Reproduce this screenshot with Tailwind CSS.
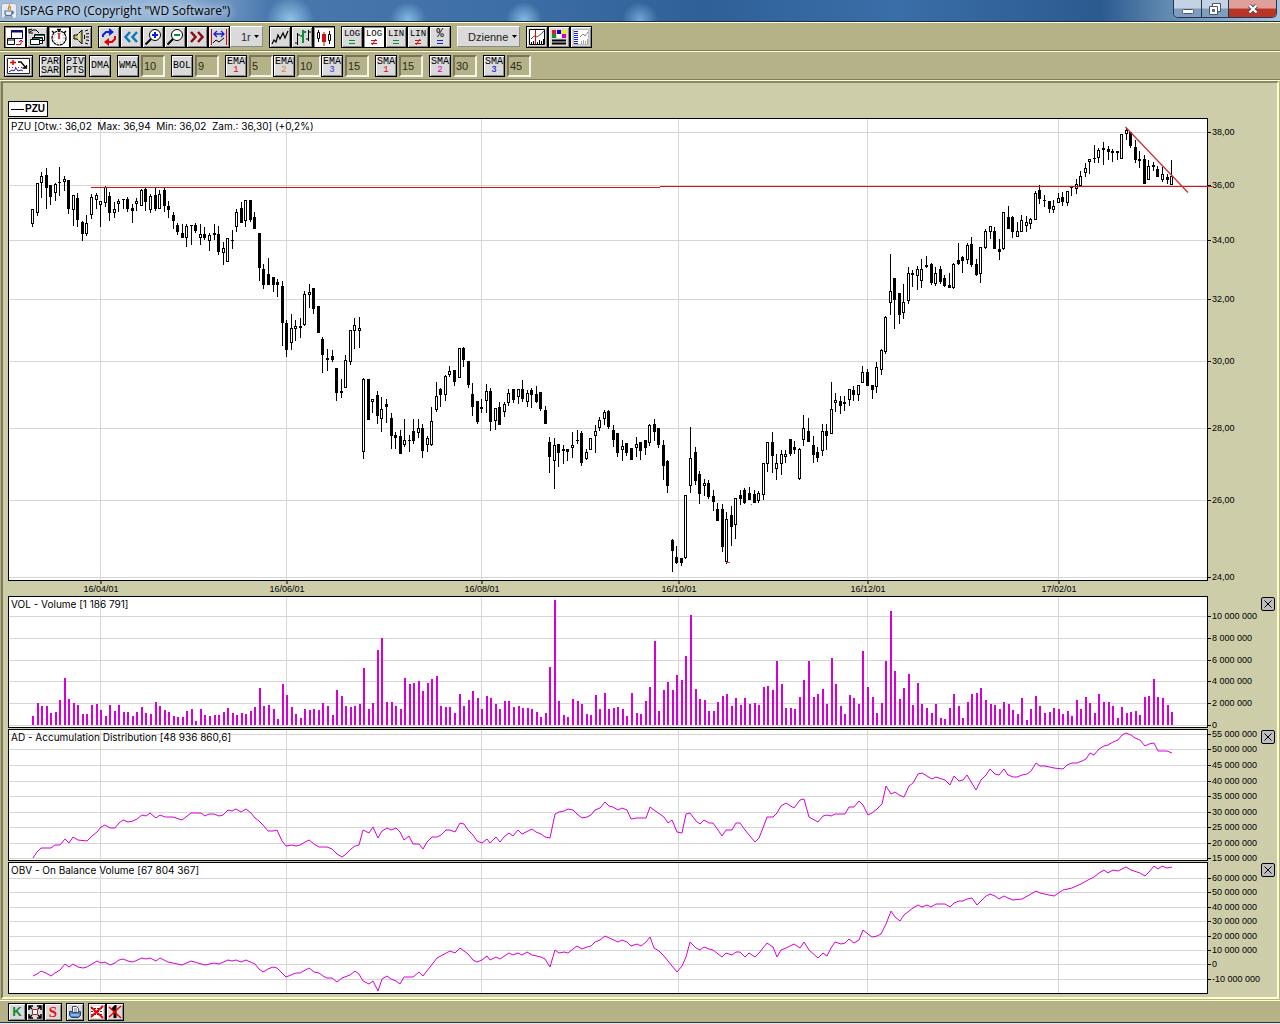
<!DOCTYPE html>
<html lang="pl">
<head>
<meta charset="utf-8">
<title>ISPAG PRO</title>
<script src="https://cdn.jsdelivr.net/npm/@tailwindcss/browser@4"></script>
</head>
<body class="flex min-h-screen flex-col border-b border-[#dfe8ee] bg-[#b5b288] font-['Liberation_Sans',sans-serif] text-black">

<!-- Title bar -->
<header class="flex h-[22px] items-start justify-between border-b border-[#1b2d45] bg-[radial-gradient(circle_at_290px_20px,#8fc4e8_0,transparent_24px),radial-gradient(circle_at_408px_20px,#84bbe4_0,transparent_18px),radial-gradient(circle_at_524px_20px,#84bbe4_0,transparent_18px),radial-gradient(circle_at_640px_20px,#6fa6d4_0,transparent_18px),linear-gradient(90deg,#9fbddb_0,#8fb0d2_14%,#4a78ad_21%,#3d6ea6_40%,#2f6098_55%,#3a6ea8_70%,#2b5a8f_86%,#6088b0_91%,#a9c2dc_100%)]">
  <div class="flex h-[21px] items-center gap-[3px] pl-px">
    <svg class="size-4" viewBox="0 0 16 16" aria-hidden="true"><rect x=".5" y=".5" width="15" height="15" rx="2" fill="#e4edf5" stroke="#9ab"/><path d="M8 1.500c2 2-2.500 3 0 5.500M10 3.500c-1.500 1-1 2 0 3" fill="none" stroke="#e8801a" stroke-width="1.300"/><path d="M4 8h7v2c0 2-1 2.500-2 2.500H6c-1 0-2-.5-2-2.500zM11 8.500c2 0 2 2 0 2M3 14h9" fill="none" stroke="#4a7098" stroke-width="1.200"/></svg>
    <h1 class="font-['Open_Sans','Noto_Sans',sans-serif] text-[12px] leading-5 [text-shadow:0_0_6px_#d8e6f4,0_0_10px_#d8e6f4]">ISPAG PRO (Copyright "WD Software")</h1>
  </div>
  <div class="mr-[3px] flex h-[18px] overflow-hidden rounded-b-[5px] border border-t-0 border-[#24364e]">
    <button aria-label="Minimize" class="flex w-7 items-center justify-center border-r border-[#24364e] bg-linear-to-b from-[#c3d3e4] from-45% to-[#7f9dbe] to-55%"><svg class="size-3" viewBox="0 0 12 12"><rect x=".5" y="6.500" width="11" height="4" rx="1" fill="#fff" stroke="#4b5566"/></svg></button>
    <button aria-label="Restore" class="flex w-[27px] items-center justify-center border-r border-[#24364e] bg-linear-to-b from-[#c3d3e4] from-45% to-[#7f9dbe] to-55%"><svg class="size-3" viewBox="0 0 12 12"><path d="M3.500.5h8v8h-8z" fill="#fff" stroke="#4b5566"/><path d="M.5 3.500h8v8h-8z" fill="#fff" stroke="#4b5566"/><path d="M3.500 6.500h2v2h-2z" fill="#7f9dbe" stroke="#4b5566"/></svg></button>
    <button aria-label="Close" class="flex w-[47px] items-center justify-center bg-linear-to-b from-[#dfa09c] from-45% to-[#b83426] to-55%"><svg class="h-3 w-3" viewBox="0 0 12 12"><path d="M2.500 2.500l7 7M9.500 2.500l-7 7" stroke="#4b4450" stroke-width="4"/><path d="M2.500 2.500l7 7M9.500 2.500l-7 7" stroke="#fff" stroke-width="2.400"/></svg></button>
  </div>
</header>

<!-- Main toolbar -->
<nav aria-label="Chart" class="flex h-[29px] items-center gap-1.5 border-t border-b border-t-[#ffffce] border-b-[#7d7b5b] pl-1 [&>div]:flex [&_button]:flex [&_button]:size-[22px] [&_button]:flex-col [&_button]:items-center [&_button]:justify-center [&_button]:border [&_button]:border-black [&_button]:bg-[#dadada] [&_button]:font-['Liberation_Mono',monospace] [&_button]:text-[9px] [&_button]:leading-[10px] [&_button]:shadow-[inset_1px_1px_#fff,inset_-1px_-1px_#8a8a8a] [&_button[aria-pressed=true]]:bg-white [&_button[aria-pressed=true]]:shadow-[inset_1px_1px_#8a8a8a] [&_button>svg]:size-[18px] [&_svg]:fill-none">
  <div>
    <button aria-label="New window" aria-pressed="true"><svg viewBox="0 0 18 18"><path d="M5.500 2.500h11v8h-11z" stroke="#0a0a78"/><path d="M5 3.500h12" stroke="#0a0a78" stroke-width="2"/><path d="M1.500 10.500h7v6h-7z" stroke="#000"/><path d="M1 12h8" stroke="#000"/><path d="M10 16.500h5v-4M13 14l2-2 2 2" stroke="#e00000"/></svg></button>
    <button aria-label="Windows"><svg viewBox="0 0 18 18"><path d="M6.500 6.500h10v6h-10zM4.500 9.500h10v6h-10z" fill="#fff" stroke="#000"/><path d="M7 7.500h9M5 10.500h9" stroke="#167a6a"/><path d="M2.500 11.500h9v5h-9z" fill="#fff" stroke="#000"/><path d="M1 2l3-1M1 1v4h4M2 4l3-2h3l3 3" stroke="#000"/></svg></button>
    <button aria-label="Timer" aria-pressed="true"><svg viewBox="0 0 18 18"><circle cx="9" cy="10" r="7" stroke="#000" stroke-width="1.200" stroke-dasharray="3 .5"/><circle cx="9" cy="10" r="5" stroke="#777" stroke-dasharray="1 2"/><path d="M7 1.500h4M9 1v3M2 3l2 2M16 3l-2 2" stroke="#000" stroke-width="1.500"/><path d="M9 5v6" stroke="#e00000" stroke-width="1.500"/></svg></button>
    <button aria-label="Sound"><svg viewBox="0 0 18 18"><path d="M2 7h3l5-5v14l-5-5H2z" fill="#c8c070" stroke="#000"/><path d="M7 5v8" stroke="#fff"/><path d="M12.500 7v4M13 3l3-1M14 6l3-.5M14 9h3M14 12l3 .5M13 15l3 1" stroke="#000"/></svg></button>
  </div>
  <div>
    <button aria-label="Refresh"><svg viewBox="0 0 18 18"><path d="M3 9V7l3-3h4" stroke="#1020e0" stroke-width="2"/><path d="M9 0l5 4-5 4z" fill="#1020e0"/><path d="M15 8v3l-3 3H9" stroke="#e00000" stroke-width="2"/><path d="M9 10l-5 4 5 4z" fill="#e00000"/></svg></button>
    <button aria-label="Back"><svg viewBox="0 0 18 18"><path d="M8 4L3.500 9 8 14M15 4l-4.500 5 4.500 5" stroke="#0a7ab8" stroke-width="2.500"/></svg></button>
    <button aria-label="Zoom in"><svg viewBox="0 0 18 18"><circle cx="11" cy="7" r="5.500" fill="#fff" stroke="#000"/><path d="M7 11l-5.500 5.500" stroke="#000" stroke-width="2"/><path d="M11 4v6M8 7h6" stroke="#1020e0" stroke-width="2"/></svg></button>
    <button aria-label="Zoom out"><svg viewBox="0 0 18 18"><circle cx="11" cy="7" r="5.500" fill="#fff" stroke="#000"/><path d="M7 11l-5.500 5.500" stroke="#000" stroke-width="2"/><path d="M8 7h6" stroke="#0a9030" stroke-width="2"/></svg></button>
    <button aria-label="Forward"><svg viewBox="0 0 18 18"><path d="M3 4l4.500 5L3 14M10 4l4.500 5-4.500 5" stroke="#8c0a14" stroke-width="2.500"/></svg></button>
    <button aria-label="Fit range"><svg viewBox="0 0 18 18"><path d="M1.500 1v16M16.500 1v16" stroke="#e00000"/><path d="M4 6h10M7 3L4 6l3 3M11 3l3 3-3 3" stroke="#1020e0" stroke-width="1.300"/><path d="M3 15l3-3 3 2 5-4" stroke="#000"/></svg></button>
    <div class="relative flex h-[22px] w-[33px] items-center"><select aria-label="Range" class="h-[21px] w-full appearance-none border border-t-white border-r-[#8a8a8a] border-b-[#8a8a8a] border-l-white bg-[#dadada] py-0 pl-[10px] text-[11px] leading-4 text-[#30283c]"><option>1r</option></select><svg class="pointer-events-none absolute right-1 h-[3px] w-[5px]" viewBox="0 0 5 3"><path d="M0 0h5L2.500 3z" fill="#000"/></svg></div>
  </div>
  <div>
    <button aria-label="Line chart"><svg viewBox="0 0 18 18"><path d="M1 16l2-4 2 2 2-7 2 4 3-6 2 5 3-7" stroke="#000" stroke-width="1.200"/></svg></button>
    <button aria-label="Bar chart"><svg viewBox="0 0 18 18"><path d="M4.500 5v12M2 15h2.500M4.500 7H7M15.500 2v11M13 11h2.500M15.500 4H18" stroke="#000"/><path d="M10 2v13M7.500 8H10M10 4h3" stroke="#0a9030" stroke-width="2"/></svg></button>
    <button aria-label="Candle chart" aria-pressed="true"><svg viewBox="0 0 18 18"><path d="M3.500 2v2M3.500 11v3M14.500 3v3M14.500 13v3" stroke="#000"/><path d="M2.500 4.500h2v6h-2zM13.500 6.500h2v6h-2z" stroke="#000"/><path d="M9 4v14" stroke="#b01010"/><path d="M7 6h4v8H7z" fill="#d01010"/></svg></button>
  </div>
  <div>
    <button><span>LOG</span><svg class="h-[6px]!" viewBox="0 0 18 6"><path d="M6 1.500h6M6 4.500h6" stroke="#0a9030"/></svg></button>
    <button aria-pressed="true"><span>LOG</span><svg class="h-[6px]!" viewBox="0 0 18 6"><path d="M6 1.500h6M6 4.500h6M7 6l4-6" stroke="#d01010"/></svg></button>
    <button><span>LIN</span><svg class="h-[6px]!" viewBox="0 0 18 6"><path d="M6 1.500h6M6 4.500h6" stroke="#0a9030"/></svg></button>
    <button><span>LIN</span><svg class="h-[6px]!" viewBox="0 0 18 6"><path d="M6 1.500h6M6 4.500h6M7 6l4-6" stroke="#d01010"/></svg></button>
    <button><span class="text-[12px]">%</span><svg class="h-[6px]!" viewBox="0 0 18 6"><path d="M6 1.500h6M6 4.500h6" stroke="#1020e0"/></svg></button>
  </div>
  <div class="relative flex h-[22px] w-[63px] items-center"><select aria-label="Interval" class="h-[21px] w-full appearance-none border border-t-white border-r-[#8a8a8a] border-b-[#8a8a8a] border-l-white bg-[#dadada] py-0 pl-[10px] text-[11px] leading-4 text-[#222]"><option>Dzienne</option></select><svg class="pointer-events-none absolute right-[3px] h-[3px] w-[5px]" viewBox="0 0 5 3"><path d="M0 0h5L2.500 3z" fill="#000"/></svg></div>
  <div>
    <button aria-label="Cursor"><svg viewBox="0 0 18 18"><path d="M1.500 1.500h15v15h-15z" fill="#fff" stroke="#000"/><path d="M3 11l3-3 3 1 4-3 3-3" stroke="#555"/><path d="M3.500 14v2M5.500 13v3M9.500 14v2M11.500 12v4M13.500 13v3M15.500 11v5" stroke="#000"/><path d="M7.500 2v14" stroke="#e00000"/></svg></button>
    <button aria-label="Colours"><svg viewBox="0 0 18 18"><path d="M2 2h4v4H2z" fill="#e02020"/><path d="M7 2h4v4H7z" fill="#0000e8"/><path d="M12 2h4v4h-4z" fill="#f0f000"/><path d="M2 6h4v4H2z" fill="#109030"/><path d="M7 6h4v4H7z" fill="#fff"/><path d="M12 6h4v4h-4z" fill="#d000d0"/><path d="M2 12.500h14M2 15.500h14" stroke="#000" stroke-width="2"/></svg></button>
    <button aria-label="Panels"><svg viewBox="0 0 18 18"><path d="M1.500 1.500h15v15h-15z" fill="#fff" stroke="#bbb"/><path d="M2 3.500h4M2 5.500h4M2 7.500h4M2 9.500h4M2 11.500h4M2 13.500h4M2 15.500h4" stroke="#1020e0"/><path d="M8 9l3-3 2 2 3-4" stroke="#888"/><path d="M9.500 13v3M11.500 12v4M13.500 13v3M15.500 11v5" stroke="#aaa"/></svg></button>
  </div>
</nav>

<!-- Indicator toolbar -->
<nav aria-label="Indicators" class="flex h-[29px] items-center gap-1.5 border-t border-b border-t-[#ffffce] border-b-[#7d7b5b] pl-1 [&_div]:flex [&_button]:mr-0.5 [&_button]:flex [&_button]:h-[22px] [&_button]:w-[22px] [&_button]:flex-col [&_button]:items-center [&_button]:justify-center [&_button]:border [&_button]:border-black [&_button]:bg-[#dadada] [&_button]:font-['Liberation_Mono',monospace] [&_button]:text-[10px] [&_button]:leading-[9px] [&_button]:shadow-[inset_1px_1px_#fff,inset_-1px_-1px_#8a8a8a] [&_input]:h-[22px] [&_input]:w-6 [&_input]:border-2 [&_input]:border-t-[#77755a] [&_input]:border-r-[#f4f4ee] [&_input]:border-b-[#f4f4ee] [&_input]:border-l-[#77755a] [&_input]:bg-[#b5b288] [&_input]:pl-px [&_input]:text-[11px] [&_input]:leading-4 [&_input]:text-[#2c2c20]">
  <button aria-label="Drawing" class="mr-0! w-[29px]!"><svg class="h-[18px] w-[25px] fill-none" viewBox="0 0 25 18"><path d="M1.500 1.500h22v15h-22z" fill="#fff" stroke="#222"/><path d="M4 5.500h6M7 3v5" stroke="#e00000" stroke-width="1.500"/><path d="M3 10.500h18" stroke="#e00000" stroke-dasharray="1 2"/><path d="M3 15l3-2 2 1 2-3 2 3 3-1 2 1" stroke="#1020e0"/><path d="M12 5h3l5 6M16.500 11h4V8" stroke="#000" stroke-width="1.300"/></svg></button>
  <div class="gap-[3px] [&>button]:mr-0!">
    <button><span>PAR</span><span>SAR</span></button>
    <button><span>PIV</span><span>PTS</span></button>
    <button>DMA</button>
  </div>
  <div><button>WMA</button><input aria-label="WMA" value="10"></div>
  <div><button>BOL</button><input aria-label="BOL" value="9"></div>
  <div>
    <button><span>EMA</span><span class="text-[9px] text-[#f00000]">1</span></button><input aria-label="EMA 1" value="5">
    <button><span>EMA</span><span class="text-[9px] text-[#e08020]">2</span></button><input aria-label="EMA 2" value="10">
    <button><span>EMA</span><span class="text-[9px] text-[#3030e0]">3</span></button><input aria-label="EMA 3" value="15">
  </div>
  <div><button><span>SMA</span><span class="text-[9px] text-[#f00000]">1</span></button><input aria-label="SMA 1" value="15"></div>
  <div><button><span>SMA</span><span class="text-[9px] text-[#d000d0]">2</span></button><input aria-label="SMA 2" value="30"></div>
  <div><button><span>SMA</span><span class="text-[9px] text-[#0000e0]">3</span></button><input aria-label="SMA 3" value="45"></div>
</nav>

<!-- Charts -->
<main class="grow border-t border-[#ffffce]">
  <div class="ml-px mr-px border-x-2 border-t-2 border-b-2 border-t-[#8b8967] border-r-[#ffffce] border-b-[#ffffce] border-l-[#7d7b5b] bg-[#cecdaa] pt-[18px] pb-[3px] pl-[5px]">
    <div class="mb-px flex h-4 w-10 items-center justify-end gap-px border border-black bg-white px-0.5 text-[10px] leading-3 font-bold"><span class="h-px grow bg-black"></span>PZU</div>
    <section id="price" class="mb-px"></section>
    <section id="vol" class="mb-px"></section>
    <section id="ad" class="mb-px"></section>
    <section id="obv"></section>
  </div>
</main>

<!-- Bottom toolbar -->
<footer class="flex h-[23px] items-center gap-1 border-t border-b border-t-[#ffffce] border-b-[#2a3a40] pl-2 [&>div]:flex [&_button]:flex [&_button]:size-[18px] [&_button]:items-center [&_button]:justify-center [&_button]:border [&_button]:border-black [&_button]:bg-[#dadada] [&_button]:font-['Liberation_Serif',serif] [&_button]:text-[15px] [&_button]:leading-4 [&_button]:font-bold [&_button]:shadow-[inset_1px_1px_#fff,inset_-1px_-1px_#8a8a8a] [&_svg]:size-[14px] [&_svg]:fill-none">
  <div>
    <button class="font-['Liberation_Sans',sans-serif]! text-[13px]! text-[#0a8a30]">K</button>
    <button aria-label="Full view"><svg viewBox="0 0 14 14"><path d="M1 5V1h4M9 1h4v4M13 9v4H9M5 13H1V9M1 1l3 3M13 1l-3 3M1 13l3-3M13 13l-3-3" stroke="#000" stroke-width="1.500"/><path d="M4.500 4.500h5v5h-5z" fill="#fff" stroke="#b02020"/></svg></button>
    <button class="text-[#f01010]">S</button>
  </div>
  <div>
    <button aria-label="Print"><svg viewBox="0 0 14 14"><path d="M1.500 6.500h11v4l-2 2h-7l-2-2z" fill="#4a86c0" stroke="#1c4a80"/><path d="M4.500 1.500h4l2 2v4h-6z" fill="#fff" stroke="#445"/><path d="M6 4h3M6 6h3" stroke="#678"/><path d="M3 10h8" stroke="#d0e4f4"/></svg></button>
  </div>
  <div>
    <button aria-label="Clear lines"><svg viewBox="0 0 14 14"><path d="M1 1h12v12H1z" fill="#fff"/><path d="M1 3.500h12M1 6.500h12M1 9.500h12" stroke="#333" stroke-dasharray="2 1"/><path d="M1 2l12 11M13 1L1 12" stroke="#f00000" stroke-width="2"/></svg></button>
    <button aria-label="Clear one line"><svg viewBox="0 0 14 14"><path d="M4 5l3-3v11" stroke="#000" stroke-width="3"/><path d="M1 2l12 11M13 1L1 12" stroke="#f00000" stroke-width="1.500"/></svg></button>
  </div>
</footer>

<script>
// Session candles: high, body top, body bottom, low; a trailing "b" marks a falling session
const candles = `209,209,224,227
183,183,213,216
172,176,183,198
168,175,188,209b
185,185,197,205b
183,184,193,201
167,182,183,196b
176,179,182,191
180,180,209,214b
195,195,210,226
193,198,220,227b
221,222,234,241b
215,223,234,236
194,197,215,219
193,195,200,209
201,201,205,227
186,187,203,207
192,196,213,221b
202,209,213,218
199,201,204,212
199,199,200,209b
197,199,209,212b
204,208,211,223b
198,201,204,211
189,190,206,206
188,189,202,211b
194,196,210,213
188,195,209,211b
190,194,209,209
187,190,206,212b
201,206,210,218b
212,215,221,229b
223,225,232,235b
224,233,238,238b
224,226,238,247
225,225,226,245b
223,225,231,233b
224,234,238,245
227,234,238,240b
233,235,241,251
224,233,235,240b
226,234,252,255b
242,248,253,265
238,238,262,262
230,240,241,249b
209,212,227,232
202,208,223,223b
200,200,221,227
200,200,220,222b
212,217,229,229b
233,233,268,281b
264,269,285,289b
258,274,285,285b
277,277,285,292b
279,282,285,297b
281,286,323,346b
320,323,350,357b
314,328,343,350
320,326,329,341
318,326,328,338b
291,294,325,326
284,292,295,308
288,288,309,314b
306,306,333,333b
337,339,355,373b
349,358,360,371b
350,356,360,362b
368,368,393,401b
379,391,393,398b
355,360,388,388
330,330,362,365
318,325,331,349
317,328,331,348
378,379,452,459
379,379,420,420b
399,399,402,413
391,395,416,424b
397,409,419,432
399,404,407,423b
413,418,436,449b
432,435,438,449b
430,436,454,454b
419,440,445,447
435,440,441,452b
419,431,441,444b
419,428,433,438
424,428,451,458b
436,438,445,452
407,421,445,446
382,396,410,412
388,389,395,407b
375,376,395,401
366,371,375,377
370,370,382,386b
348,348,378,378
347,348,360,367b
361,361,385,388b
383,394,407,416b
401,401,422,424b
399,407,409,413b
384,391,401,413
388,391,422,431b
408,408,421,430
402,407,425,425b
402,404,412,417
389,393,403,406
389,389,400,403b
389,389,397,404
380,389,399,402b
390,393,402,407
388,390,395,408b
386,394,402,403b
392,392,409,411b
406,410,424,424b
437,442,457,473b
438,445,461,489
444,444,453,467b
445,449,451,464b
449,449,452,461b
432,445,448,458
430,440,441,444b
431,433,463,466b
449,452,459,460
438,438,450,450
425,431,436,453
417,420,428,431
410,412,419,425
410,411,427,429b
425,430,440,447b
433,433,453,457b
440,446,450,461
443,443,453,456b
448,448,460,460b
437,444,448,457
442,442,451,460b
440,440,448,455b
424,425,443,446
419,424,432,441b
428,428,445,448b
440,445,466,480b
460,461,486,493b
539,540,551,572b
546,557,563,564b
558,558,563,566b
495,495,558,559
427,458,486,493
447,452,481,485b
471,474,494,504b
479,483,486,496
480,483,497,499b
490,496,502,511b
503,509,521,521b
504,509,547,552b
512,519,562,564
506,515,527,546b
498,498,525,539
490,495,499,505b
488,490,503,504b
487,493,500,500b
490,494,503,503b
491,493,501,503
463,463,495,500
442,442,464,472
432,442,456,473b
454,463,469,480
450,454,464,475
450,454,457,463
439,439,454,456b
441,447,450,454b
448,449,479,480
415,428,440,446
418,431,442,442b
436,445,455,463b
447,452,458,462b
424,431,451,456
424,431,436,450b
382,409,434,434
393,400,403,412
396,401,406,414b
396,402,404,411b
389,389,400,406
386,390,395,401b
385,385,395,401
366,372,383,383
369,372,386,386b
385,385,390,399b
362,367,387,393
349,350,370,375
316,317,352,354
254,291,303,315
278,278,300,329b
293,293,315,324b
284,302,313,319
267,273,301,304
270,273,275,287b
266,269,276,290
259,269,281,288
256,265,267,268b
263,264,283,285b
267,273,284,286
266,269,282,284b
275,278,286,287b
273,285,288,288b
263,264,288,289
243,260,264,265b
256,257,261,273b
243,245,260,264
237,244,265,267b
259,264,275,276b
247,247,274,283
229,231,248,249
226,226,232,239
227,231,249,249b
239,249,252,260b
212,212,249,250
206,217,229,229b
216,217,232,238b
222,231,237,237
215,220,232,232
216,222,226,232
218,219,224,229
191,193,220,220
185,190,199,204b
195,200,201,207b
201,201,209,213b
200,206,210,213
193,198,203,203
192,197,202,206b
191,191,203,206
187,187,188,196b
179,184,189,194
171,176,186,186
163,168,173,177
159,159,162,174
145,158,159,163b
148,150,158,163
142,148,150,165b
146,149,152,160b
149,151,153,162b
151,151,153,160b
134,134,159,159
128,130,134,140
132,132,146,148b
140,147,160,163b
151,159,161,168b
155,159,184,184b
160,166,180,180
162,165,167,171b
166,169,177,177b
167,174,180,182
174,177,180,184b
160,176,185,185`.split('\n').map(r => ({ v: r.replace('b', '').split(',').map(Number), down: r.endsWith('b') }));

const volume = [9,22,19,19,12,13,25,47,26,22,20,11,11,20,21,15,9,20,14,20,13,13,9,13,18,12,11,23,19,15,13,9,8,8,14,16,4,16,10,9,10,10,13,17,12,10,12,11,14,18,37,19,20,16,6,41,30,18,11,7,16,15,16,15,22,19,10,35,29,19,18,19,21,57,16,22,75,87,23,23,19,16,47,41,42,44,34,42,46,49,19,18,18,12,31,19,25,34,27,16,29,27,21,16,24,24,18,19,17,17,16,13,8,12,58,125,24,10,8,26,24,21,11,10,30,16,32,16,17,18,16,9,32,12,11,24,38,84,14,35,43,35,50,45,69,110,36,26,25,14,14,23,29,31,19,27,20,27,21,22,20,38,39,35,64,41,17,17,16,28,45,64,28,31,36,21,67,41,19,11,30,27,21,74,38,28,12,22,64,114,54,26,37,51,20,42,21,17,12,21,7,6,17,31,19,7,23,31,32,37,25,21,20,16,23,21,15,11,27,5,16,29,19,12,13,17,16,11,14,9,25,16,28,22,12,31,23,23,19,7,18,12,13,14,10,28,29,46,28,27,20,13];

const adLine = "33,858 37,852 41,848 51,848 55,845 60,845 65,839 69,843 73,837 78,840 87,841 92,836 97,832 101,827 105,825 110,828 115,828 119,823 123,820 128,822 133,821 137,819 142,815 146,816 150,813 156,818 160,815 165,817 173,817 182,820 191,813 201,813 205,816 209,814 214,814 219,816 223,815 228,810 232,811 236,809 241,812 246,809 251,813 255,818 259,821 263,825 268,831 273,831 277,830 282,841 286,846 292,845 296,846 300,845 305,842 309,840 314,844 319,847 327,847 332,849 337,854 342,857 346,854 351,849 355,846 359,845 363,830 369,833 373,827 378,838 382,831 387,828 391,830 396,828 400,832 404,840 409,836 413,844 419,844 423,849 427,842 432,837 437,837 441,835 446,830 450,830 455,832 460,823 464,824 468,830 473,835 477,841 482,843 487,839 490,843 496,837 500,842 504,837 509,833 513,836 518,830 522,834 532,829 536,832 541,834 545,837 550,838 555,814 559,812 564,811 568,809 573,810 577,814 582,818 587,817 591,815 595,810 600,808 605,802 609,806 613,807 618,810 622,808 627,810 631,819 637,818 646,818 650,807 654,810 664,817 668,823 672,820 677,832 682,833 686,814 690,813 696,821 700,824 704,820 709,823 713,823 718,830 722,836 726,830 732,830 736,823 740,823 745,830 755,842 759,838 763,828 767,817 773,817 777,813 781,806 786,803 794,808 800,800 804,799 809,817 818,822 823,816 827,815 831,816 835,814 845,814 849,807 854,807 859,801 863,805 868,815 872,813 877,809 882,804 886,786 891,794 895,792 899,795 904,797 909,786 913,783 918,774 922,773 932,779 936,777 945,780 950,785 954,776 959,781 963,780 967,775 976,790 981,780 986,775 990,769 995,774 999,775 1004,769 1008,775 1013,777 1017,777 1022,775 1027,774 1031,771 1036,763 1040,766 1045,766 1054,768 1063,769 1067,765 1072,763 1077,763 1082,761 1086,759 1090,753 1094,755 1099,749 1104,746 1108,745 1113,742 1118,740 1122,735 1126,733 1131,735 1135,738 1140,740 1145,746 1149,744 1154,743 1158,751 1167,751 1172,753";
const obvLine = "33,976 37,974 41,971 46,973 51,976 55,973 60,970 65,964 69,967 73,964 78,967 83,968 87,967 97,961 101,963 105,962 110,965 115,963 119,960 123,959 128,961 133,962 142,958 146,959 150,958 156,961 160,958 168,962 182,965 191,961 205,965 214,963 219,964 228,960 232,961 236,960 241,962 246,960 255,964 259,969 263,972 268,969 273,967 277,968 286,977 296,973 300,973 309,968 314,972 319,973 323,976 327,978 332,978 337,982 342,978 350,975 355,971 359,974 363,981 369,984 373,981 378,991 382,979 387,976 391,979 396,981 400,984 404,977 413,977 419,972 423,976 430,967 437,958 450,951 455,953 460,948 464,951 468,954 473,960 477,962 482,960 487,956 490,960 496,957 500,959 509,953 513,955 518,953 522,955 527,952 532,955 541,957 545,959 550,967 555,950 559,953 564,952 568,953 573,949 577,946 582,949 587,947 591,946 595,942 600,940 605,936 618,942 622,940 627,942 631,946 637,944 641,946 646,942 650,937 654,948 659,951 664,956 668,961 672,966 677,972 682,966 686,957 690,942 696,948 700,950 704,947 709,949 713,950 722,957 726,953 732,955 736,952 740,952 745,957 749,953 755,957 759,953 767,943 773,947 777,957 781,950 786,948 794,944 800,948 804,942 809,950 818,958 823,953 827,956 831,948 835,942 841,944 845,943 849,939 854,943 859,940 863,930 868,934 872,937 877,936 881,934 886,924 891,911 895,917 900,921 904,915 909,911 913,908 918,905 922,907 927,905 931,907 936,904 945,904 950,907 954,903 959,901 963,901 967,899 972,898 977,905 981,901 986,896 990,894 995,896 999,899 1004,896 1008,898 1013,900 1022,899 1031,894 1036,891 1040,893 1049,895 1054,896 1063,890 1072,888 1081,884 1088,880 1094,877 1099,873 1104,870 1108,873 1113,870 1118,871 1126,867 1131,870 1140,873 1145,876 1149,872 1154,866 1158,869 1162,866 1167,868 1172,867";

const months = [[100, '16/04/01'], [286, '16/06/01'], [481, '16/08/01'], [678, '16/10/01'], [867, '16/12/01'], [1058, '17/02/01']];
const LEFT = 9, WIDTH = 1198;
const barX = i => Math.round(32 + 4.538 * i);
const line = pts => `<polyline points="${pts}" fill="none" stroke="#d600d6" shape-rendering="auto"/>`;

const outline = candles.map(({ v: [h, t, b, l] }, i) => {
  const x = barX(i);
  return `M${x} ${h}h1V${l}h-1zM${x - 1} ${t}h3V${b}h-3z`;
}).join('');
const hollow = candles.map(({ v: [, t, b], down }, i) => down || b - t < 3 ? '' : `M${barX(i)} ${t + 1}h1V${b - 1}h-1z`).join('');

// Draws one panel: plot, caption, value axis and (for indicators) a close button
function panel(id, top, height, caption, ticks, body, closable) {
  const grid = months.map(([x]) => `M${x} ${top}h1v${height}h-1z`).join('') + ticks.map(([y]) => `M${LEFT} ${y}h${WIDTH}v1h-${WIDTH}z`).join('');
  document.getElementById(id).innerHTML = `
  <div class="flex">
    <div class="relative grow border border-black bg-white">
      <svg class="block w-full overflow-visible" height="${height}" viewBox="${LEFT} ${top} ${WIDTH} ${height}" preserveAspectRatio="none" shape-rendering="crispEdges" aria-hidden="true"><path d="${grid}" fill="#d6d6d6"/>${body}</svg>
      <h2 class="absolute top-px left-0.5 font-['Inter',sans-serif] text-[10px] leading-3 whitespace-pre">${caption}</h2>
    </div>
    <div class="relative w-[69px] shrink-0 text-[9px] leading-[10px]">
      ${ticks.map(([y, t]) => `<div class="absolute left-0 flex h-[10px] -translate-y-1/2 items-center gap-px whitespace-nowrap" style="top:${y - top + 1}px"><span class="h-px w-[3px] bg-black"></span>${t}</div>`).join('')}
      ${closable ? '<button aria-label="Close panel" class="absolute top-px right-0.5 flex size-[14px] items-center justify-center rounded-xs border border-black bg-[#bdbdbd]"><svg class="size-2" viewBox="0 0 8 8"><path d="M.5.5l7 7M7.500.5l-7 7" stroke="#000"/></svg></button>' : ''}
    </div>
  </div>`;
}

panel('price', 119, 461, 'PZU [Otw.: 36,02  Max: 36,94  Min: 36,02  Zam.: 36,30] (+0,2%)',
  [[132, '38,00'], [185, '36,00'], [240, '34,00'], [299, '32,00'], [361, '30,00'], [428, '28,00'], [500, '26,00'], [577, '24,00']],
  `<path d="${outline}"/><path d="${hollow}" fill="#fff"/>
   <path d="M91 187h569v1H91zM660 186h552v1H660z" fill="#d01418"/><path d="M1125.500 127L1188 192.500" stroke="#d03030" stroke-width="1.300" shape-rendering="auto"/><path d="M726 562h4v1h-4zM751 504h1v1h-1z" fill="#e03030"/>`, false);
document.getElementById('price').insertAdjacentHTML('beforeend',
  `<div class="relative mr-[69px] h-[14px] text-[9px] leading-[10px]">${months.map(([x, t]) => `<div class="absolute top-0 flex -translate-x-1/2 flex-col items-center" style="left:${(x - 8 + 1) / 12}%"><span class="h-[3px] w-px bg-black"></span>${t}</div>`).join('')}</div>`);

panel('vol', 597, 130, 'VOL - Volume [1 186 791]',
  [[616, '10 000 000'], [638, '8 000 000'], [660, '6 000 000'], [681, '4 000 000'], [703, '2 000 000'], [725, '0']],
  `<path d="${volume.map((h, i) => `M${barX(i)} 725h2v-${h}h-2z`).join('')}" fill="#d600d6"/>`, true);

panel('ad', 730, 130, 'AD - Accumulation Distribution [48 936 860,6]',
  [[734, '55 000 000'], [749, '50 000 000'], [765, '45 000 000'], [781, '40 000 000'], [796, '35 000 000'], [812, '30 000 000'], [827, '25 000 000'], [843, '20 000 000'], [858, '15 000 000']],
  line(adLine), true);

panel('obv', 863, 130, 'OBV - On Balance Volume [67 804 367]',
  [[878, '60 000 000'], [892, '50 000 000'], [907, '40 000 000'], [921, '30 000 000'], [936, '20 000 000'], [950, '10 000 000'], [964, '0'], [979, '-10 000 000']],
  line(obvLine), true);
</script>
</body>
</html>
